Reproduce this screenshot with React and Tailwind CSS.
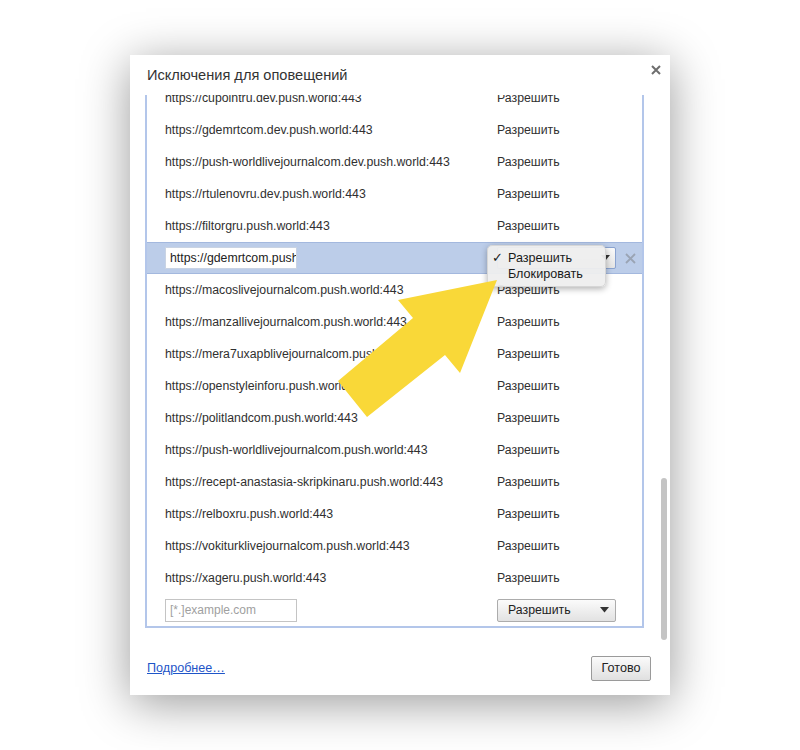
import React from "react";

const rowsTop = [
  "https://cupointru.dev.push.world:443",
  "https://gdemrtcom.dev.push.world:443",
  "https://push-worldlivejournalcom.dev.push.world:443",
  "https://rtulenovru.dev.push.world:443",
  "https://filtorgru.push.world:443",
];
const rowsBottom = [
  "https://macoslivejournalcom.push.world:443",
  "https://manzallivejournalcom.push.world:443",
  "https://mera7uxapblivejournalcom.push.world:443",
  "https://openstyleinforu.push.world:443",
  "https://politlandcom.push.world:443",
  "https://push-worldlivejournalcom.push.world:443",
  "https://recept-anastasia-skripkinaru.push.world:443",
  "https://relboxru.push.world:443",
  "https://vokiturklivejournalcom.push.world:443",
  "https://xageru.push.world:443",
];

function Row({ url }) {
  return (
    <div className="h-[32px] flex items-center pl-[18px] text-[12.3px] text-[#303030]">
      <div className="w-[332px] whitespace-nowrap overflow-hidden">{url}</div>
      <div>Разрешить</div>
    </div>
  );
}

function Caret() {
  return (
    <svg width="9" height="6" viewBox="0 0 9 6" className="block">
      <path d="M0 0 L9 0 L4.5 5.5 Z" fill="#333" />
    </svg>
  );
}

export default function App() {
  return (
    <div
      className="relative w-[800px] h-[750px] bg-white overflow-hidden pt-[55px] pl-[130px]"
      style={{ fontFamily: '"Liberation Sans", Arial, sans-serif' }}
    >
      <div className="relative w-[540px] h-[640px] bg-white shadow-[0_8px_45px_rgba(0,0,0,0.4)] flex flex-col">
        {/* header */}
        <div className="h-[40px] shrink-0 flex items-start justify-between pl-[17px] pr-[10px] pt-[11px]">
          <div className="text-[14.6px] leading-[18px] text-[#333]">Исключения для оповещений</div>
          <svg width="10" height="10" viewBox="0 0 10 10" className="mt-[-1px] mr-[-1px]">
            <path d="M1 1 L9 9 M9 1 L1 9" stroke="#6e6e6e" strokeWidth="2" />
          </svg>
        </div>

        {/* content viewport */}
        <div className="relative h-[550px] shrink-0 overflow-hidden">
          <div className="ml-[15px] w-[499px] mt-[-15px] border-2 border-[#b3c6ea] bg-white">
            {rowsTop.map((u) => (
              <Row key={u} url={u} />
            ))}
            {/* editing row */}
            <div className="relative h-[32px] flex items-center pl-[18px] bg-[#bccde9] border-y border-[#a3b8de]">
              <div className="w-[332px]">
                <div className="w-[132px] h-[22px] bg-white border border-[#c9d3e3] pl-[4px] text-[12.3px] text-[#222] leading-[20px] whitespace-nowrap overflow-hidden">
                  https://gdemrtcom.push
                </div>
              </div>
              <div className="w-[119px] h-[22px] border border-[#8aa3d0] rounded-[2px] bg-gradient-to-b from-[#fafafa] to-[#e4e4e4] flex items-center justify-end pr-[5px]">
                <Caret />
              </div>
              <svg width="11" height="11" viewBox="0 0 11 11" className="ml-[9px]">
                <path d="M1 1 L10 10 M10 1 L1 10" stroke="#9aa4b4" strokeWidth="1.8" />
              </svg>
              {/* popup menu */}
              <div className="absolute left-[340px] top-[2px] w-[119px] h-[42px] rounded-[5px] bg-[#eeeeee]/95 shadow-[0_2px_6px_rgba(0,0,0,0.3)] border border-[#d6d6d6] text-[12.6px] text-[#1a1a1a] pt-[4px]">
                <div className="h-[16px] flex items-center">
                  <span className="w-[20px] pl-[4px] text-[13px] font-bold" style={{ fontFamily: '"DejaVu Sans", sans-serif' }}>✓</span>
                  <span>Разрешить</span>
                </div>
                <div className="h-[16px] flex items-center pl-[20px]">Блокировать</div>
              </div>
            </div>
            {rowsBottom.map((u) => (
              <Row key={u} url={u} />
            ))}
            {/* new entry row */}
            <div className="h-[32px] flex items-center pl-[18px] text-[12.3px]">
              <div className="w-[332px]">
                <div className="w-[132px] h-[23px] border border-[#c4c4c4] pl-[4px] text-[12px] leading-[21px] text-[#a0a0a0]">
                  [*.]example.com
                </div>
              </div>
              <div className="w-[119px] h-[23px] border border-[#acacac] rounded-[2px] bg-gradient-to-b from-[#fbfbfb] to-[#e2e2e2] flex items-center justify-between pl-[10px] pr-[6px] text-[#222]">
                <span>Разрешить</span>
                <Caret />
              </div>
            </div>
          </div>
          {/* scrollbar thumb */}
          <div className="absolute left-[531px] top-[383px] w-[6px] h-[162px] rounded-full bg-[#c4c4c4]" />
        </div>

        {/* footer */}
        <div className="flex-1 flex items-start justify-between pl-[17px] pr-[19px] pt-[11px]">
          <a className="text-[12.6px] text-[#1e55c8] underline mt-[3px]" href="#">Подробнее…</a>
          <div className="w-[60px] h-[25px] border border-[#9a9a9a] rounded-[2px] bg-gradient-to-b from-[#fbfbfb] to-[#e0e0e0] flex items-center justify-center text-[12.6px] text-[#222]">
            Готово
          </div>
        </div>
      </div>

      {/* yellow arrow overlay */}
      <svg className="absolute inset-0 pointer-events-none" width="800" height="750" viewBox="0 0 800 750">
        <polygon
          points="497,280 398,300 413,318 338,381 367,417 445,355 460,373"
          fill="#f9d838"
        />
      </svg>
    </div>
  );
}
